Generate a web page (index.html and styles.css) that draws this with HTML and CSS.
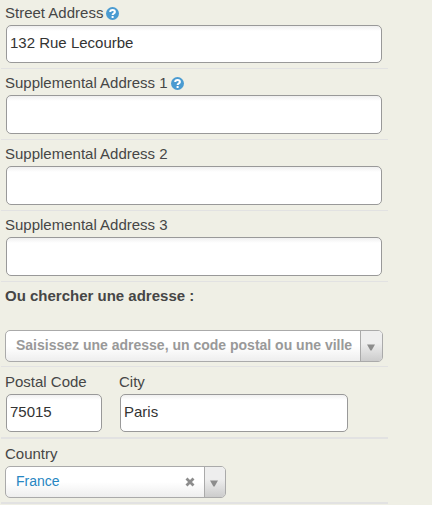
FILE: index.html
```html
<!DOCTYPE html>
<html lang="en">
<head>
<meta charset="utf-8">
<meta name="viewport" content="width=device-width, initial-scale=1">
<title>Address</title>
<link rel="stylesheet" href="styles.css">
</head>
<body>
<form class="address">
  <div class="row row-first">
    <div class="label-line">
      <label for="street">Street Address</label>
      <button class="help" type="button" aria-label="Help: Street Address">
        <svg viewBox="0 0 13 13" width="13" height="13" aria-hidden="true"><circle cx="6.5" cy="6.5" r="6.5"/><path d="M4.2 5C4.2 2.3 8.9 2.3 8.9 5C8.9 6.4 6.6 6.3 6.6 8M6.6 9v2"/></svg>
      </button>
    </div>
    <input class="text text-short" id="street" type="text" value="132 Rue Lecourbe">
  </div>
  <div class="row">
    <div class="label-line">
      <label for="supp1">Supplemental Address 1</label>
      <button class="help" type="button" aria-label="Help: Supplemental Address 1">
        <svg viewBox="0 0 13 13" width="13" height="13" aria-hidden="true"><circle cx="6.5" cy="6.5" r="6.5"/><path d="M4.2 5C4.2 2.3 8.9 2.3 8.9 5C8.9 6.4 6.6 6.3 6.6 8M6.6 9v2"/></svg>
      </button>
    </div>
    <input class="text" id="supp1" type="text">
  </div>
  <div class="row">
    <div class="label-line"><label for="supp2">Supplemental Address 2</label></div>
    <input class="text" id="supp2" type="text">
  </div>
  <div class="row">
    <div class="label-line"><label for="supp3">Supplemental Address 3</label></div>
    <input class="text" id="supp3" type="text">
  </div>
  <div class="row row-picker row-search">
    <div class="label-line"><label class="strong" for="search">Ou chercher une adresse :</label></div>
    <div class="picker">
      <select class="choice placeholder" id="search">
        <option>Saisissez une adresse, un code postal ou une ville</option>
      </select>
      <span class="arrow"><svg viewBox="0 0 8 7" width="8" height="7" aria-hidden="true"><path d="M0 .5h8L4.6 6.5H3.4z"/></svg></span>
    </div>
  </div>
  <div class="row row-thick columns">
    <div>
      <div class="label-line"><label for="postal">Postal Code</label></div>
      <input class="text text-short" id="postal" type="text" value="75015">
    </div>
    <div>
      <div class="label-line"><label for="city">City</label></div>
      <input class="text text-short" id="city" type="text" value="Paris">
    </div>
  </div>
  <div class="row row-thick row-picker">
    <div class="label-line"><label for="country">Country</label></div>
    <div class="picker picker-country">
      <select class="choice chosen" id="country">
        <option>France</option>
      </select>
      <button class="clear" type="button" aria-label="Clear country">
        <svg viewBox="0 0 10 10" width="10" height="10" aria-hidden="true"><path d="M1.5 1.5l7 7M8.5 1.5l-7 7"/></svg>
      </button>
      <span class="arrow"><svg viewBox="0 0 8 7" width="8" height="7" aria-hidden="true"><path d="M0 .5h8L4.6 6.5H3.4z"/></svg></span>
    </div>
  </div>
</form>
</body>
</html>
```

FILE: styles.css
```css
* {
  box-sizing: border-box;
}

body {
  margin: 0;
  background: #efefe5;
  color: #464646;
  font: 15px/20px "Liberation Sans", Arial, sans-serif;
}

.address {
  margin: 0 44px 0 1px;
}

.row {
  padding: 4px 5px 5px 4px;
  border-bottom: 1px solid #e2e2e2;
}

.row-first {
  padding-top: 3px;
}

.row-thick {
  padding-top: 5px;
  border-bottom-width: 2px;
}

.row-picker {
  padding-bottom: 4px;
}

.label-line {
  display: flex;
  align-items: center;
  gap: 3px;
  height: 20px;
  margin-bottom: 2px;
}

.row-search .label-line {
  margin-bottom: 24px;
}

.strong {
  font-weight: bold;
}

.help {
  display: flex;
  padding: 0;
  border: 0;
  background: none;
}

.help circle {
  fill: #4a9bd1;
}

.help path {
  fill: none;
  stroke: #fff;
  stroke-width: 2;
}

.text {
  display: block;
  width: calc(100% - 2px);
  height: 39px;
  margin: 0 1px;
  padding: 0 3px 4px;
  border: 1px solid #999;
  border-radius: 5px;
  background: linear-gradient(#f0f0f0, #fff 5px);
  color: #333;
  font: inherit;
}

.text-short {
  height: 38px;
}

.columns {
  display: grid;
  grid-template-columns: 98px minmax(0, 230px);
  gap: 16px;
}

.picker {
  display: grid;
  grid-template-columns: 1fr auto 22px;
  align-items: center;
  height: 32px;
  border: 1px solid #aaa;
  border-radius: 5px;
  background: linear-gradient(#fff 50%, #eee);
  overflow: hidden;
}

.picker-country {
  grid-template-columns: 1fr auto 21px;
  max-width: 221px;
}

.choice {
  grid-area: 1 / 1 / 2 / 4;
  width: 100%;
  height: 30px;
  padding: 0 24px 2px 10px;
  border: 0;
  background: none;
  appearance: none;
  font: 14px/20px "Liberation Sans", Arial, sans-serif;
}

.placeholder {
  color: #999;
  font-weight: bold;
}

.chosen {
  color: #2786c2;
}

.clear {
  grid-area: 1 / 2;
  display: flex;
  margin-right: 9px;
  padding: 0;
  border: 0;
  background: none;
}

.clear path {
  stroke: #8c8c8c;
  stroke-width: 2.8;
}

.arrow {
  grid-area: 1 / 3;
  display: flex;
  align-items: center;
  justify-content: center;
  height: 30px;
  padding: 3px 2px 0 0;
  border-left: 1px solid #aaa;
  background: linear-gradient(#eee 40%, #ccc);
  pointer-events: none;
}

.arrow path {
  fill: #8c8c8c;
}
```
